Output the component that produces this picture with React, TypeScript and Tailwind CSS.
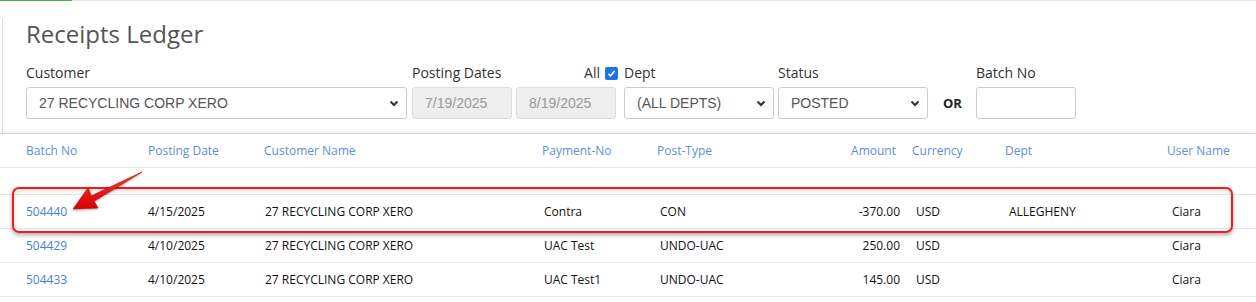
import React from "react";

function Chevron() {
  return (
    <svg width="10" height="7" viewBox="0 0 10 7" className="shrink-0">
      <polyline points="1.5,1.5 5,5 8.5,1.5" fill="none" stroke="#333" strokeWidth="2" />
    </svg>
  );
}

function SelectBox({ value, width }: { value: string; width: string }) {
  return (
    <div
      className={`flex h-[32px] ${width} items-center justify-between rounded-[3px] border border-[#ccc] bg-white pl-[12px] pr-[7px] font-['Liberation_Sans',Arial,sans-serif] text-[14px] text-[#555]`}
    >
      <span>{value}</span>
      <Chevron />
    </div>
  );
}

function DateBox({ value }: { value: string }) {
  return (
    <div className="flex h-[32px] w-[100px] items-center rounded-[3px] border border-[#ddd] bg-[#eeeeee] pl-[12px] font-['Liberation_Sans',Arial,sans-serif] text-[14px] text-[#999]">
      {value}
    </div>
  );
}

const rows = [
  { batch: "504440", date: "4/15/2025", customer: "27 RECYCLING CORP XERO", pay: "Contra", type: "CON", amount: "-370.00", cur: "USD", dept: "ALLEGHENY", user: "Ciara" },
  { batch: "504429", date: "4/10/2025", customer: "27 RECYCLING CORP XERO", pay: "UAC Test", type: "UNDO-UAC", amount: "250.00", cur: "USD", dept: "", user: "Ciara" },
  { batch: "504433", date: "4/10/2025", customer: "27 RECYCLING CORP XERO", pay: "UAC Test1", type: "UNDO-UAC", amount: "145.00", cur: "USD", dept: "", user: "Ciara" },
];

export default function App() {
  return (
    <div className="relative h-[302px] w-[1256px] overflow-hidden bg-white font-['Open_Sans',sans-serif]">
      {/* top strip */}
      <div className="flex h-px">
        <div className="w-[72px] bg-[#4cae4c]" />
        <div className="flex-1 bg-[#e3e3e3]" />
      </div>

      {/* filter panel */}
      <div className="ml-[2px] border-l border-[#dcdcdc] pb-[14px] pl-[23px]">
        <h1 className="mt-[17px] text-[24px] leading-[32px] text-[#555]">Receipts Ledger</h1>

        <div className="mt-[13px] flex items-end text-[14px] leading-[20px] text-[#333]">
          <div className="w-[381px]">
            <div>Customer</div>
            <div className="mt-[4px]">
              <SelectBox value="27 RECYCLING CORP XERO" width="w-[381px]" />
            </div>
          </div>

          <div className="ml-[5px] w-[206px]">
            <div className="flex justify-between">
              <span>Posting Dates</span>
              <span className="flex items-center gap-[5px]">
                All
                <span className="flex h-[13px] w-[13px] items-center justify-center rounded-[2px] bg-[#1e74e6]">
                  <svg width="9" height="9" viewBox="0 0 9 9">
                    <polyline points="1.5,4.8 3.6,6.8 7.6,2" fill="none" stroke="white" strokeWidth="1.7" />
                  </svg>
                </span>
              </span>
            </div>
            <div className="mt-[4px] flex gap-[4px]">
              <DateBox value="7/19/2025" />
              <DateBox value="8/19/2025" />
            </div>
          </div>

          <div className="ml-[6px] w-[150px]">
            <div>Dept</div>
            <div className="mt-[4px]">
              <SelectBox value="(ALL DEPTS)" width="w-[150px]" />
            </div>
          </div>

          <div className="ml-[4px] w-[150px]">
            <div>Status</div>
            <div className="mt-[4px]">
              <SelectBox value="POSTED" width="w-[150px]" />
            </div>
          </div>

          <div className="ml-[15px] flex h-[32px] items-center text-[13px] font-bold text-[#222]">OR</div>

          <div className="ml-[14px] w-[100px]">
            <div>Batch No</div>
            <div className="mt-[4px] h-[32px] w-[100px] rounded-[3px] border border-[#ccc] bg-white" />
          </div>
        </div>
      </div>

      {/* table */}
      <div className="border-t border-[#d6d6d6] text-[12px] shadow-[0_-2px_3px_rgba(0,0,0,0.06)]">
        <div className="flex h-[34px] items-center border-b border-[#e6e6e6] pl-[26px] text-[#5b8fd6]">
          <div className="w-[122px]">Batch No</div>
          <div className="w-[116px]">Posting Date</div>
          <div className="w-[278px]">Customer Name</div>
          <div className="w-[115px]">Payment-No</div>
          <div className="w-[150px]">Post-Type</div>
          <div className="w-[89px] text-right">Amount</div>
          <div className="ml-[16px] w-[93px]">Currency</div>
          <div className="w-[162px]">Dept</div>
          <div>User Name</div>
        </div>
        <div className="h-[27px] border-b border-[#e6e6e6]" />
        {rows.map((r) => (
          <div key={r.batch} className="flex h-[34px] items-center border-b border-[#e6e6e6] pl-[26px] text-[#111]">
            <div className="w-[122px] text-[#4a82c8]">{r.batch}</div>
            <div className="w-[116px]">{r.date}</div>
            <div className="w-[278px] pl-px">{r.customer}</div>
            <div className="w-[115px] pl-[2px]">{r.pay}</div>
            <div className="w-[150px] pl-[3px]">{r.type}</div>
            <div className="w-[93px] text-right">{r.amount}</div>
            <div className="ml-[16px] w-[93px]">{r.cur}</div>
            <div className="w-[162px]">{r.dept}</div>
            <div className="pl-px">{r.user}</div>
          </div>
        ))}
      </div>

      {/* annotation: highlight box */}
      <div className="pointer-events-none absolute left-[12px] top-[187px] h-[46px] w-[1221px] rounded-[7px] border-2 border-[#ee1c1c] shadow-[0_2px_4px_rgba(0,0,0,0.35),inset_0_2px_4px_rgba(0,0,0,0.15)]" />

      {/* annotation: arrow */}
      <svg className="pointer-events-none absolute left-0 top-0" width="1256" height="302">
        <defs>
          <linearGradient id="arrowFill" x1="0" y1="0" x2="0" y2="1">
            <stop offset="0" stopColor="#ff3b3b" />
            <stop offset="1" stopColor="#d40000" />
          </linearGradient>
        </defs>
        <polygon
          points="73,209 88,188 91.5,195.8 142,172 94,201.2 98,208"
          fill="url(#arrowFill)"
          stroke="#c80000"
          strokeWidth="0.6"
          strokeLinejoin="round"
          style={{ filter: "drop-shadow(0 1px 1px rgba(0,0,0,0.35))" }}
        />
      </svg>
    </div>
  );
}
